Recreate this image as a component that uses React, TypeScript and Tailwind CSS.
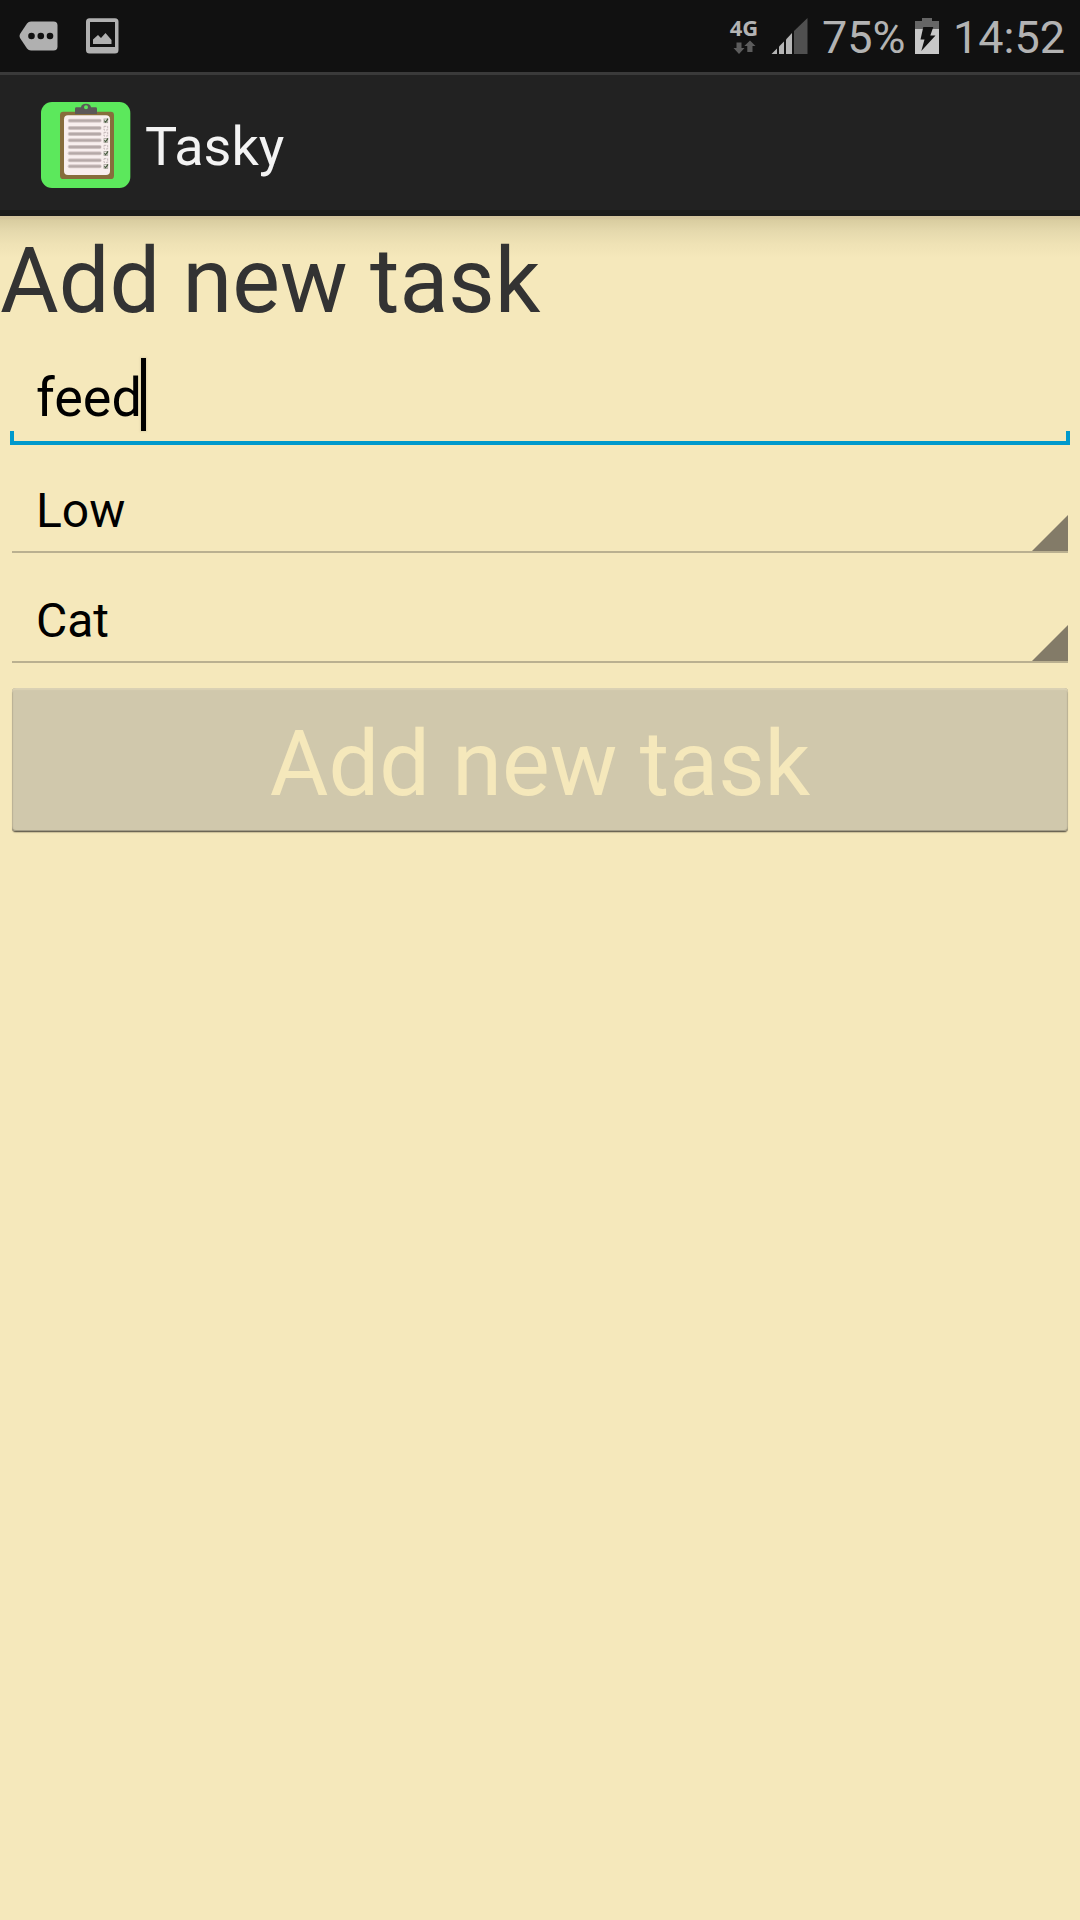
import type { ReactNode } from "react";

function MoreTagIcon() {
  return (
    <svg width="39" height="30" viewBox="0 0 39 30">
      <path
        d="M12 0.5H34.5Q38.5 0.5 38.5 4.5V25.500Q38.500 29.500 34.500 29.500H12Q9.500 29.500 8 27.500L1 17Q0 15 1 13L8 2.500Q9.500 0.500 12 0.500Z"
        fill="#b0b0b0"
      />
      <circle cx="12.500" cy="15" r="3.300" fill="#111" />
      <circle cx="21.800" cy="15" r="3.300" fill="#111" />
      <circle cx="31" cy="15" r="3.300" fill="#111" />
    </svg>
  );
}

function PictureIcon() {
  return (
    <svg width="33" height="36" viewBox="0 0 33 36">
      <path
        fillRule="evenodd"
        fill="#b0b0b0"
        d="M3.500 0.300H29Q32.500 0.300 32.500 3.800V32Q32.500 35.500 29 35.500H3.500Q0 35.500 0 32V3.800Q0 0.300 3.500 0.300ZM4 4V29H29V4Z"
      />
      <path d="M7 26V21.500L12 17L15 20L19.500 15L25.500 22V26Z" fill="#b0b0b0" />
    </svg>
  );
}

function DataArrowsIcon() {
  return (
    <svg width="23" height="15" viewBox="0 0 23 15" fill="#5c5c5c">
      <path d="M3.500 2.500H8.500V8H11.500L6 14L0.500 8H3.500Z" />
      <path d="M14.300 12V6H11.300L17 0.500L22.500 6H19.500V12Z" />
    </svg>
  );
}

function SignalIcon() {
  return (
    <svg width="38" height="36" viewBox="0 0 38 36">
      <path d="M0.500 36L6 30.500V36Z" fill="#b5b5b5" />
      <path d="M8 28.500L13 23.500V36H8Z" fill="#b5b5b5" />
      <path d="M15 21.500L21 15V36H15Z" fill="#b5b5b5" />
      <path d="M23 13L36.500 0V36H23Z" fill="#505050" />
    </svg>
  );
}

function BatteryIcon() {
  return (
    <svg width="24" height="36" viewBox="0 0 24 36">
      <path d="M7 0H17V3H24V11H0V3H7Z" fill="#666" />
      <path d="M0 11H24V36H0Z" fill="#c8c8c8" />
      <path d="M8.300 9H18.300L15.300 17.500H20.500L6.300 33L9.500 21.500H5.500Z" fill="#111" />
    </svg>
  );
}

const checklist = [
  { y: 92, done: true },
  { y: 114, done: false },
  { y: 132, done: false },
  { y: 151, done: true },
  { y: 171, done: false },
  { y: 190, done: true },
  { y: 211, done: false },
  { y: 229, done: true },
];

function TaskyLogo() {
  return (
    <svg width="91" height="88" viewBox="30 33 273 264">
      <rect x="33" y="36" width="268" height="258" rx="33" fill="#5ce85c" />
      <rect x="90" y="65" width="162" height="202" rx="10" fill="#876d3c" />
      <rect x="102" y="76" width="138" height="179" rx="12" fill="#f8efee" />
      <path
        fillRule="evenodd"
        fill="#5c5858"
        d="M135 56Q135 52 139 52H153Q154 41 168 41Q182 41 183 52H197Q201 52 201 56V72H135ZM168 46A6 6 0 0 0 168 58A6 6 0 0 0 168 46Z"
      />
      {checklist.map((item) => (
        <g key={item.y}>
          <rect x="113" y={item.y - 6} width="102" height="12" rx="6" fill="#d8cccb" />
          <rect x="116" y={item.y - 3.5} width="97" height="7" rx="3" fill="#b5a9a8" />
          <rect
            x="222"
            y={item.y - 5}
            width="11"
            height="11"
            fill="none"
            stroke={item.done ? "#9d9c93" : "#bcaeb0"}
            strokeWidth="2.5"
            strokeDasharray={item.done ? undefined : "7 3"}
          />
          {item.done && (
            <path
              d={`M223 ${item.y} L227 ${item.y + 4} L234 ${item.y - 6}`}
              fill="none"
              stroke="#42593a"
              strokeWidth="3.5"
            />
          )}
        </g>
      ))}
    </svg>
  );
}

function StatusBar() {
  return (
    <div className="flex h-[72px] items-start bg-[#111111] text-[45px] leading-[75px] text-[#b3b3b3]">
      <div className="ml-[19px] mt-[21px]">
        <MoreTagIcon />
      </div>
      <div className="ml-7 mt-[18px]">
        <PictureIcon />
      </div>
      <div className="ml-auto mt-4 flex w-[30px] flex-col items-center">
        <span className="font-['Open_Sans'] text-[22px] font-bold leading-[22px]">4G</span>
        <div className="mt-0.5">
          <DataArrowsIcon />
        </div>
      </div>
      <div className="ml-[12px] mt-[18px]">
        <SignalIcon />
      </div>
      <span className="ml-[13px] w-[84px] whitespace-nowrap">75%</span>
      <div className="ml-[9px] mt-[18px]">
        <BatteryIcon />
      </div>
      <span className="ml-[14px] w-[127px] whitespace-nowrap">14:52</span>
    </div>
  );
}

function AppBar() {
  return (
    <header className="flex h-36 items-start border-b-[6px] border-t-[3px] border-b-[#1a1a1a] border-t-[#3a3a3a] bg-[#222222]">
      <div className="ml-10 mt-[26px]">
        <TaskyLogo />
      </div>
      <h1 className="ml-[14px] mt-10 text-[54px] leading-[64px] text-[#f3f3f3]">Tasky</h1>
    </header>
  );
}

function Spinner({ children, className }: { children: ReactNode; className: string }) {
  return (
    <div className={`mx-3 flex items-end justify-between border-b-2 border-[#bab090] ${className}`}>
      <span className="mb-3 ml-6 text-[48px] leading-[56px] text-black">{children}</span>
      <svg width="36" height="36" viewBox="0 0 36 36">
        <path d="M36 0V36H0Z" fill="#837b68" />
      </svg>
    </div>
  );
}

export default function App() {
  return (
    <div className="flex h-[1920px] w-[1080px] flex-col overflow-hidden bg-[#f5e8bb] font-[Roboto,sans-serif]">
      <StatusBar />
      <AppBar />
      <main className="flex flex-1 flex-col">
        <div className="h-[118px] bg-[linear-gradient(to_bottom,#d0c19b_0px,#d2c49d_3px,#d9cda0_4px,#e5d9ad_15px,#efe2b5_28px,#f5e8bb_42px)] pt-[13px]">
          <h2 className="text-[90px] leading-[106px] text-[#333333]">Add new task</h2>
        </div>
        <div className="flex h-[97px] items-start pl-9">
          <span className="mt-8 text-[54px] leading-[64px] text-black">feed</span>
          <span className="-ml-px mt-6 h-[73px] w-[5px] bg-black shadow-[0_0_2px_1px_#e2d6ad]" />
        </div>
        <div className="mx-[10px] h-[14px] border-x-4 border-b-4 border-[#0099cc]" />
        <Spinner className="h-[108px]">Low</Spinner>
        <Spinner className="h-[110px]">Cat</Spinner>
        <button
          type="button"
          className="mx-3 mt-[25px] h-[143px] rounded-[4px] bg-[#d0c8ac] pt-[10px] text-[90px] leading-[106px] text-[#f5e8bb] shadow-[0_1px_0_#6b6554,0_2px_1px_#c9bd98,inset_0_-1px_0_#a39c86,inset_0_2px_1px_#dad1b4,inset_1px_0_1px_#b5ad92,inset_-1px_0_1px_#b5ad92]"
        >
          Add new task
        </button>
      </main>
    </div>
  );
}
